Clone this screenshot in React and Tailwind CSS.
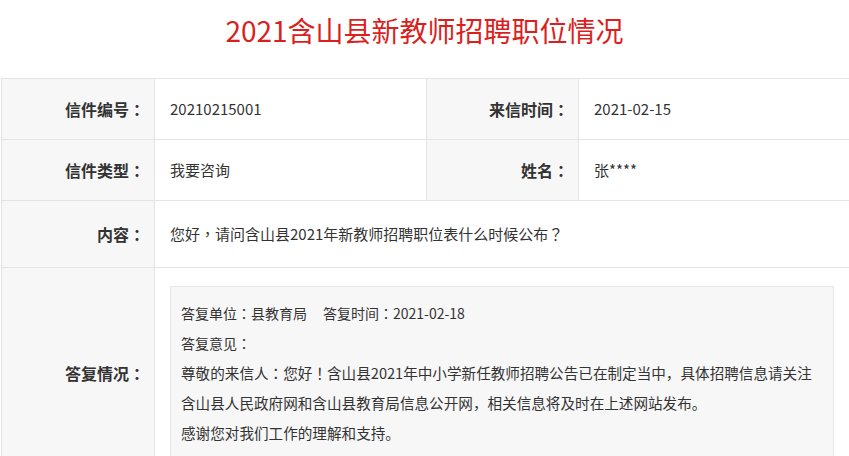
import React from 'react';

const font = { fontFamily: '"Noto Sans CJK SC", "Noto Sans", sans-serif' };
const tc = { fontFamily: '"Noto Sans CJK TC", "Noto Sans CJK SC", sans-serif' };

// centred full-width punctuation, as in the reference
const P = ({ children }) => <span style={tc}>{children}</span>;

const Label = ({ children, className = '' }) => (
  <div className={`flex items-center justify-end pr-[9px] bg-[#f7f7f7] border-r border-b border-[#e4e4e4] text-[16px] font-bold text-[#333] ${className}`}>
    {children}<P>：</P>
  </div>
);

const Value = ({ children, className = '' }) => (
  <div className={`flex items-center pl-[15px] border-r border-b border-[#e4e4e4] text-[15px] text-[#333] ${className}`}>
    {children}
  </div>
);

const App = () => {
  return (
    <div className="w-[849px] h-[456px] overflow-hidden bg-white" style={font}>
      <h1 className="pt-[8px] h-[78px] text-center text-[28px] leading-[44px] font-normal text-[#da1f1f]">
        2021含山县新教师招聘职位情况
      </h1>

      <div className="ml-px w-[849px] border-l border-t border-[#e4e4e4] grid grid-cols-[153px_272px_152px_1fr]">
        <Label className="h-[61px]">信件编号</Label>
        <Value className="h-[61px]">20210215001</Value>
        <Label className="h-[61px]">来信时间</Label>
        <Value className="h-[61px]">2021-02-15</Value>

        <Label className="h-[61px]">信件类型</Label>
        <Value className="h-[61px]">我要咨询</Value>
        <Label className="h-[61px]">姓名</Label>
        <Value className="h-[61px]">张****</Value>

        <Label className="h-[67px]">内容</Label>
        <Value className="h-[67px] col-span-3 text-[14px]">
          <span>您好<P>，</P>请问含山县2021年新教师招聘职位表什么时候公布<P>？</P></span>
        </Value>

        <Label>答复情况</Label>
        <div className="col-span-3 pt-[18px] pr-[15px] pl-[15px] pb-[18px] border-r border-b border-[#e4e4e4]">
          <div className="bg-[#f7f7f7] border border-[#e8e8e8] pt-[11px] pb-[11px] pl-[10px] pr-0 text-[#333] leading-[30px]">
            <p className="text-[14px]">
              答复单位<P>：</P>县教育局<span className="ml-[16px]">答复时间<P>：</P>2021-02-18</span>
            </p>
            <p className="text-[14px]">答复意见<P>：</P></p>
            <p className="text-[14.6px]">
              尊敬的来信人<P>：</P>您好<P>！</P>含山县2021年中小学新任教师招聘公告已在制定当中，具体招聘信息请关注<br />
              含山县人民政府网和含山县教育局信息公开网，相关信息将及时在上述网站发布。
            </p>
            <p className="text-[14.6px]">感谢您对我们工作的理解和支持。</p>
          </div>
        </div>
      </div>
    </div>
  );
};

export default App;
